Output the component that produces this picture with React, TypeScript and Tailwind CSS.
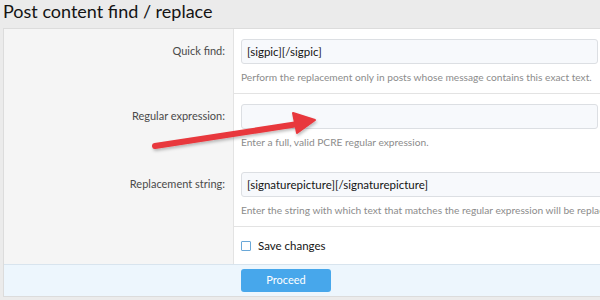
import React from "react"

const font = { fontFamily: 'Lato, "Segoe UI", "Open Sans", sans-serif' }

function Row({
  label,
  value,
  hint,
  separated,
  tall,
}: {
  label: string
  value: string
  hint: string
  separated?: boolean
  tall?: boolean
}) {
  return (
    <div className="flex">
      <div className="w-[230px] shrink-0 bg-[#f5f5f5] border-r border-[#e3e3e3] pt-[10px] pr-[8px] text-right">
        <div className="h-[25px] flex items-center justify-end text-[11px] text-[#4a4a4a]">{label}</div>
      </div>
      <div
        className={
          "flex-1 pt-[10px] pl-[7px] pr-[2px] " +
          (tall ? "pb-[13px] " : "pb-[9px] ") +
          (separated ? "border-b border-[#e3e3e3]" : "")
        }
      >
        <div className="h-[25px] flex items-center px-[5px] bg-[#f7f9fc] border border-[#dcdfe3] rounded-[3px] text-[11.5px] text-[#141414]">
          {value}
        </div>
        <p className="mt-[6px] text-[10.2px] leading-[14px] text-[#8c8c8c] whitespace-nowrap overflow-hidden">{hint}</p>
      </div>
    </div>
  )
}

export default function App() {
  return (
    <div className="relative w-[600px] h-[300px] overflow-hidden bg-[#ebebeb]" style={font}>
      <h1 className="h-[28px] pl-[3px] text-[18px] leading-[23px] text-[#141414]">Post content find / replace</h1>

      <div className="ml-[3px] border border-r-0 border-[#dcdcdc] bg-white">
        <Row
          label="Quick find:"
          value="[sigpic][/sigpic]"
          hint="Perform the replacement only in posts whose message contains this exact text."
          separated
        />
        <Row label="Regular expression:" value="" hint="Enter a full, valid PCRE regular expression." tall />
        <Row
          label="Replacement string:"
          value="[signaturepicture][/signaturepicture]"
          hint="Enter the string with which text that matches the regular expression will be replaced."
          separated
        />

        <div className="flex">
          <div className="w-[230px] shrink-0 bg-[#f5f5f5] border-r border-[#e3e3e3]" />
          <label className="flex-1 h-[37px] flex items-center gap-[7px] pl-[7px] text-[11.5px] text-[#141414]">
            <span className="w-[10px] h-[10px] border border-[#6aa8d8] bg-white rounded-[1px]" />
            Save changes
          </label>
        </div>

        <div className="flex border-t border-[#d8e4ee] bg-[#edf6fd] h-[32px] items-center">
          <div className="w-[230px] shrink-0" />
          <button className="ml-[7px] w-[90px] h-[23px] rounded-[3px] bg-[#47a7eb] text-white text-[11px]">
            Proceed
          </button>
        </div>
      </div>

      <svg className="absolute left-0 top-0 pointer-events-none" width="600" height="300">
        <defs>
          <filter id="sh" x="-10%" y="-50%" width="120%" height="200%">
            <feDropShadow dx="1" dy="2" stdDeviation="1.5" floodColor="#000" floodOpacity="0.25" />
          </filter>
        </defs>
        <g filter="url(#sh)" fill="#e8383d" stroke="#e8383d">
          <line x1="155" y1="146" x2="298" y2="124" strokeWidth="6" strokeLinecap="round" />
          <polygon points="315,120 293,113 297,133" strokeWidth="2" strokeLinejoin="round" />
        </g>
      </svg>
    </div>
  )
}
